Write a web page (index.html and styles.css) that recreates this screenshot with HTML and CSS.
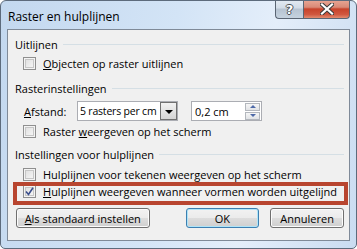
FILE: index.html
```html
<!DOCTYPE html>
<html lang="nl">
<head>
<meta charset="UTF-8" />
<title>Raster en hulplijnen</title>
<link rel="stylesheet" href="styles.css">
</head>
<body>
<div class="window">
  <div class="titlebar">
    <span class="title">Raster en hulplijnen</span>
    <div class="caption-buttons">
      <div class="cap-btn help">?</div>
      <div class="cap-btn close">
        <svg width="14" height="12" viewBox="0 0 14 12">
          <path d="M2 1.5 L12 10.5 M12 1.5 L2 10.5" stroke="#3b3b3b" stroke-width="4.2" stroke-linecap="square" fill="none"/>
          <path d="M2 1.5 L12 10.5 M12 1.5 L2 10.5" stroke="#ffffff" stroke-width="2.2" stroke-linecap="square" fill="none"/>
        </svg>
      </div>
    </div>
  </div>

  <div class="client">
    <div class="group-head"><span>Uitlijnen</span></div>
    <div class="check-row first"><span class="checkbox"></span><span><u>O</u>bjecten op raster uitlijnen</span></div>

    <div class="group-head gap-big"><span>Rasterinstellingen</span></div>
    <div class="field-row">
      <label class="field-label"><u>A</u>fstand:</label>
      <div class="select">
        <span class="select-value">5 rasters per cm</span>
        <span class="select-btn"><span class="arrow-down"></span></span>
      </div>
      <div class="spin">
        <span class="spin-value">0,2 cm</span>
        <span class="spin-btns">
          <span class="spin-btn"><span class="tri-up"></span></span>
          <span class="spin-btn"><span class="tri-down"></span></span>
        </span>
      </div>
    </div>
    <div class="check-row"><span class="checkbox"></span><span>Raster <u>w</u>eergeven op het scherm</span></div>

    <div class="group-head gap-mid"><span>Instellingen voor hulplijnen</span></div>
    <div class="check-row tight"><span class="checkbox"></span><span>Hulplijnen voor tekenen weergeven op het scherm</span></div>
    <div class="check-row tight next"><span class="checkbox checked">
      <svg width="9" height="9" viewBox="0 0 9 9"><path d="M1 4.5 L3.5 7.5 L8 0.8" stroke="#3c4f8c" stroke-width="1.6" fill="none"/></svg>
    </span><span><u>H</u>ulplijnen weergeven wanneer vormen worden uitgelijnd</span></div>

    <div class="buttons">
      <button class="btn wide"><u>A</u>ls standaard instellen</button>
      <button class="btn default">OK</button>
      <button class="btn">Annuleren</button>
    </div>

    <div class="highlight"></div>
  </div>
</div>
</body>
</html>
```

FILE: styles.css
```css
body {
  margin: 0;
  background: #ffffff;
  font-family: "Open Sans", "Noto Sans", sans-serif;
  font-size: 11px;
  color: #000;
}
.window {
  width: 357px;
  height: 249px;
  box-sizing: border-box;
  border: 1px solid #5d6b7c;
  border-radius: 6px 6px 5px 5px;
  background: linear-gradient(100deg, #c3d8ef 0%, #d3e4f6 45%, #e4eefa 70%, #cadcf1 100%);
  overflow: hidden;
}
.titlebar {
  height: 28px;
  display: flex;
  justify-content: space-between;
  align-items: flex-start;
}
.title {
  padding: 7px 0 0 7px;
  font-size: 12px;
  color: #000;
}
.caption-buttons {
  display: flex;
  margin-right: 6px;
  margin-top: -1px;
}
.cap-btn {
  height: 19px;
  box-sizing: border-box;
  border: 1px solid #5a6573;
  border-top: none;
  display: flex;
  align-items: center;
  justify-content: center;
}
.help {
  width: 28px;
  border-radius: 0 0 0 4px;
  border-right: none;
  background: linear-gradient(#e3ebf3 0%, #d2dce7 45%, #b6c3d1 50%, #c5d2df 100%);
  color: #fff;
  font-family: "DejaVu Sans", sans-serif;
  font-weight: bold;
  font-size: 13px;
  text-shadow: -1px 0 #4a4f55, 1px 0 #4a4f55, 0 -1px #4a4f55, 0 1px #4a4f55;
}
.close {
  width: 47px;
  border-radius: 0 0 4px 0;
  background: linear-gradient(#e8a795 0%, #d98a77 40%, #c7432b 50%, #d0573f 80%, #e28b70 100%);
}
.client {
  position: relative;
  width: 343px;
  height: 212px;
  margin-left: 6px;
  box-sizing: border-box;
  border: 1px solid #7f8a98;
  background: #f0f0f0;
  padding: 4px 5px 0 0;
}
.group-head {
  height: 20px;
  display: flex;
  align-items: center;
  padding-left: 7px;
  gap: 5px;
}
.group-head::after {
  content: "";
  flex: 1;
  height: 1px;
  background: #d5dfe5;
}
.gap-big {
  margin-top: 6px;
}
.gap-mid {
  margin-top: 4px;
}
.check-row {
  height: 18px;
  display: flex;
  align-items: center;
  padding-left: 15px;
  gap: 7px;
}
.check-row.tight {
  height: 17px;
  margin-top: 2px;
}
.check-row.tight.next {
  margin-top: 0;
}
.checkbox {
  width: 13px;
  height: 13px;
  box-sizing: border-box;
  border: 1px solid #8f8f8f;
  background: linear-gradient(135deg, #dcdcdc 0%, #f4f4f4 80%, #fff 100%);
  box-shadow: inset 0 0 0 1px #f4f4f4, inset 0 0 0 2px #c6c6c6;
  display: flex;
  align-items: center;
  justify-content: center;
}
.field-row {
  height: 22px;
  margin-top: 2px;
  display: flex;
  align-items: center;
  padding-left: 16px;
}
.field-label {
  width: 53px;
}
.select {
  width: 101px;
  height: 20px;
  box-sizing: border-box;
  border: 1px solid #abadb3;
  background: #fff;
  display: flex;
  align-items: center;
  justify-content: space-between;
}
.select-value {
  padding-left: 2px;
  white-space: nowrap;
  font-size: 10.5px;
  letter-spacing: -0.2px;
}
.select-btn {
  flex: none;
  width: 17px;
  height: 18px;
  box-sizing: border-box;
  border: 1px solid #707070;
  background: linear-gradient(#f2f2f2, #e3e3e3 50%, #d4d4d4);
  display: flex;
  align-items: center;
  justify-content: center;
}
.arrow-down {
  width: 0;
  height: 0;
  border-left: 4px solid transparent;
  border-right: 4px solid transparent;
  border-top: 4px solid #000;
  margin-top: 1px;
}
.spin {
  width: 71px;
  height: 20px;
  margin-left: 13px;
  box-sizing: border-box;
  border: 1px solid #abadb3;
  background: #fff;
  display: flex;
  align-items: center;
  justify-content: space-between;
}
.spin-value {
  padding-left: 3px;
  white-space: nowrap;
}
.spin-btns {
  display: flex;
  flex-direction: column;
  gap: 1px;
  margin-right: 1px;
}
.spin-btn {
  width: 15px;
  height: 8px;
  box-sizing: border-box;
  border: 1px solid #b3b7bd;
  background: linear-gradient(#f6f6f6, #e1e3e6);
  display: flex;
  align-items: center;
  justify-content: center;
}
.tri-up, .tri-down {
  width: 0;
  height: 0;
  border-left: 3px solid transparent;
  border-right: 3px solid transparent;
}
.tri-up {
  border-bottom: 3px solid #4e6aa8;
}
.tri-down {
  border-top: 3px solid #4e6aa8;
}
.buttons {
  display: flex;
  margin-top: 8px;
  padding-left: 8px;
}
.btn {
  height: 20px;
  box-sizing: border-box;
  border: 1px solid #707070;
  border-radius: 3px;
  background: linear-gradient(#f2f2f2 0%, #ebebeb 50%, #dddddd 51%, #cfcfcf 100%);
  box-shadow: inset 0 0 0 1px #fcfcfc;
  font-family: inherit;
  font-size: 11px;
  color: #000;
  padding: 0;
  width: 74px;
  margin-left: 11px;
}
.btn.wide {
  width: 134px;
  margin-left: 0;
  margin-right: 25px;
}
.btn.default {
  border-color: #3c7fb1;
  box-shadow: inset 0 0 0 1px #aee4f8;
}
.highlight {
  position: absolute;
  left: 5px;
  top: 152px;
  width: 335px;
  height: 23px;
  box-sizing: border-box;
  border: 4px solid #b8452f;
}
```
